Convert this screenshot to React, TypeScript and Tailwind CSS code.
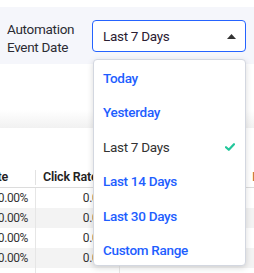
import React from "react";

const items = [
  { label: "Today", selected: false },
  { label: "Yesterday", selected: false },
  { label: "Last 7 Days", selected: true },
  { label: "Last 14 Days", selected: false },
  { label: "Last 30 Days", selected: false },
  { label: "Custom Range", selected: false },
];

const rows = [0, 1, 2, 3, 4];

export default function App() {
  return (
    <div
      className="relative w-[254px] h-[273px] overflow-hidden bg-white text-[#333]"
      style={{ fontFamily: "Roboto, 'Liberation Sans', sans-serif" }}
    >
      <div className="h-[7px] bg-white" />
      <div className="h-[57px] bg-[#f5f6fb] flex items-start pl-[7px] pt-[13px]">
        <div className="w-[85px] text-[13.5px] tracking-[-0.3px] leading-[18px] text-[#2b2b33]">
          Automation
          <br />
          Event Date
        </div>
        <div className="w-[154px] h-[32px] border border-[#2563ff] rounded-[4px] bg-white flex items-center justify-between pl-[10px] pr-[9px]">
          <span className="text-[13.5px] tracking-[-0.3px] text-[#2b2033]">Last 7 Days</span>
          <svg width="9" height="5" viewBox="0 0 9 5">
            <path d="M0 5 L4.5 0 L9 5 Z" fill="#333" />
          </svg>
        </div>
      </div>
      <div className="h-[46px] bg-white" />
      <div className="h-[18px] bg-gradient-to-b from-white to-[#f1f1f1]" />
      <div className="bg-white pt-[40px]">
        <div className="flex h-[20px] border-b border-[#dcdcdc] text-[12.5px] tracking-[-0.2px] font-semibold text-[#222] whitespace-nowrap">
          <div className="w-[36px] overflow-hidden flex justify-end items-center pr-[27px] border-r border-[#e2e2e2] my-[2px]">
            Open Rate
          </div>
          <div className="w-[84px] flex items-center pl-[7px]">Click Rate</div>
          <div className="flex-1" />
          <div className="w-[2px] flex items-center text-[#b5651d] font-normal overflow-hidden">I</div>
        </div>
        {rows.map((r) => (
          <div
            key={r}
            className={`flex h-[20px] text-[12px] tracking-[-0.4px] text-[#333] ${r % 2 === 1 ? "bg-[#f3f3f3]" : "bg-white"}`}
          >
            <div className="w-[36px] flex items-center justify-end pr-[7px] border-r border-[#e6e6e6] whitespace-nowrap">
              0.00%
            </div>
            <div className="w-[84px] flex items-center justify-end pr-[6px] border-r border-[#e6e6e6]">
              0.00%
            </div>
            <div className="flex-1" />
          </div>
        ))}
      </div>

      <div className="absolute left-[93px] top-[59px] w-[153px] h-[207px] bg-white border border-[#d3d7e0] rounded-[4px] shadow-[0_2px_6px_rgba(0,0,0,0.15)] pt-[1px]">
        {items.map((it) => (
          <div
            key={it.label}
            className="h-[34.4px] flex items-center justify-between pl-[9px] pr-[10px]"
          >
            <span
              className={`text-[13.5px] tracking-[-0.3px] ${it.selected ? "text-[#333]" : "text-[#1e5eff] font-medium"}`}
            >
              {it.label}
            </span>
            {it.selected && (
              <svg width="10" height="8" viewBox="0 0 10 8">
                <path d="M1 4.2 L3.8 6.8 L9 1.2" stroke="#22c79b" strokeWidth="2.2" fill="none" strokeLinecap="round" strokeLinejoin="round" />
              </svg>
            )}
          </div>
        ))}
      </div>
    </div>
  );
}
